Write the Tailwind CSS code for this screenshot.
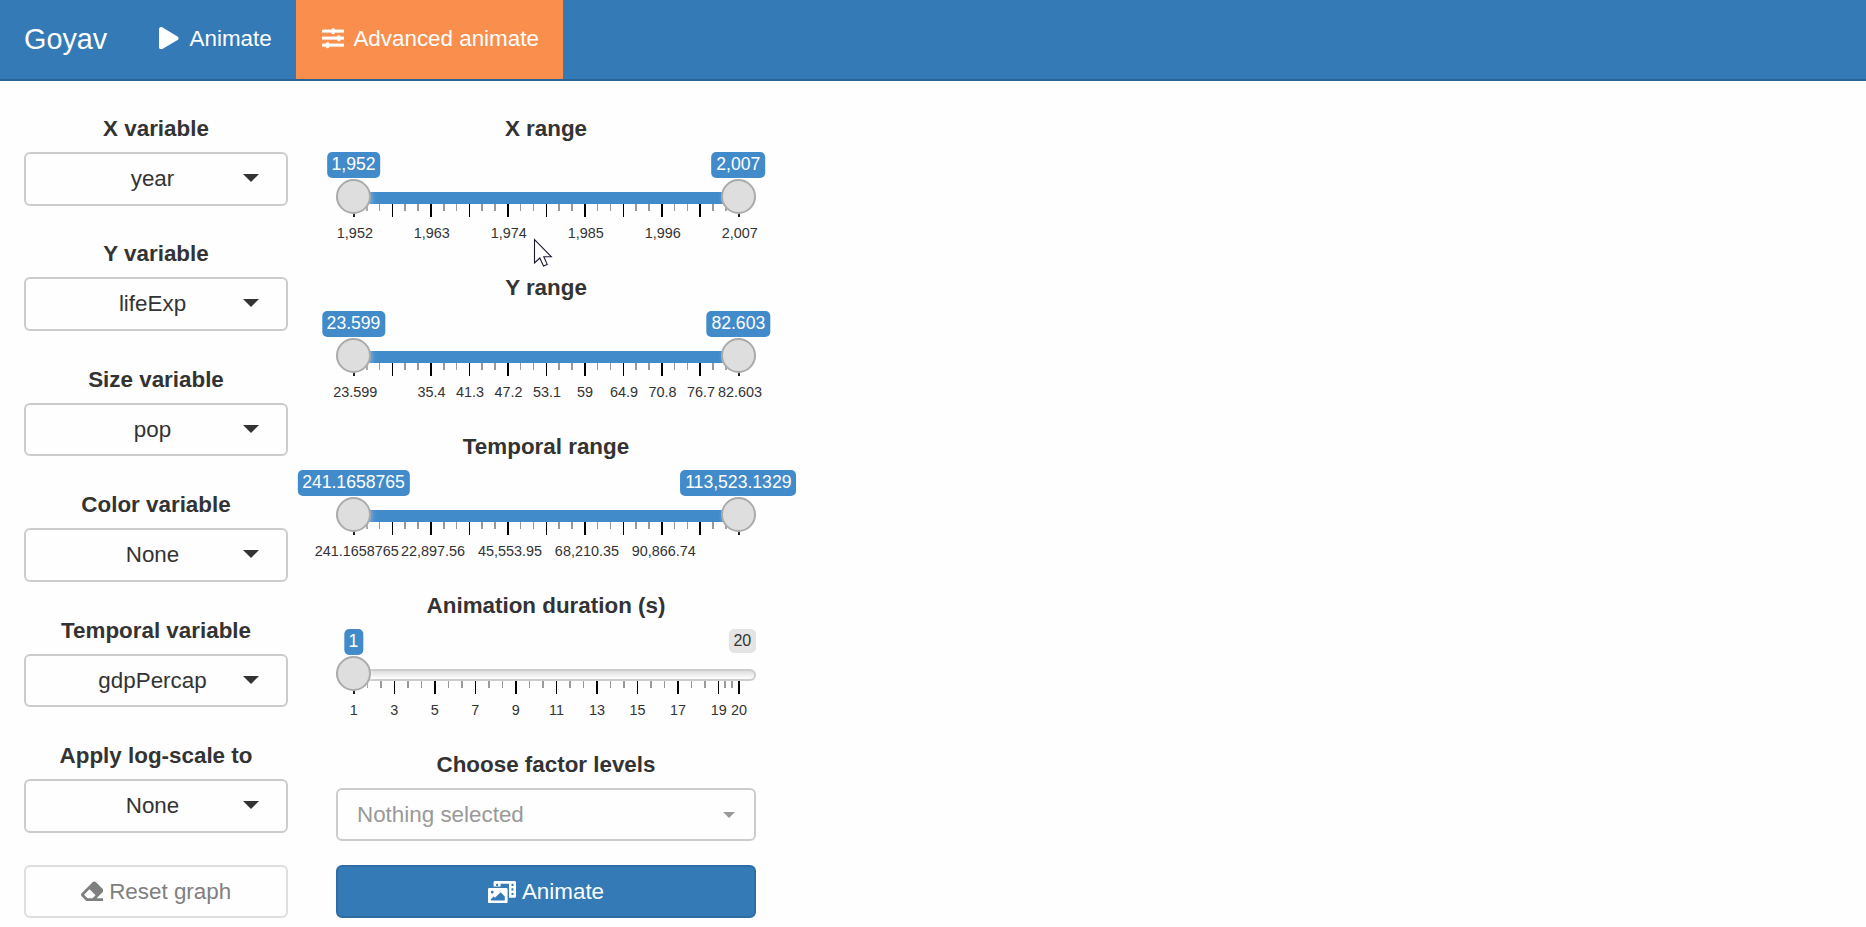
<!DOCTYPE html>
<html lang="en">
<head>
<meta charset="utf-8">
<title>Goyav</title>
<script src="https://cdn.jsdelivr.net/npm/@tailwindcss/browser@4"></script>
</head>
<body class="h-[927px] overflow-hidden bg-[#fefefe] font-['Liberation_Sans',Arial,sans-serif] text-[22.4px] leading-8 text-[#333]">

<nav class="flex h-[81px] border-b-2 border-[#2a6496] bg-[#337ab7] text-white">
  <a class="flex w-[135px] items-center pl-6 pb-px text-[28.8px]">Goyav</a>
  <a class="flex w-[161px] items-center pl-6 pb-[3px]">
    <svg class="h-[22.4px] w-[19.6px]" viewBox="0 0 448 512" fill="currentColor"><path d="M424.4 214.7L72.4 6.6C43.8-10.3 0 6.1 0 47.9V464c0 37.5 40.7 60.1 72.4 41.3l352-208c31.4-18.5 31.5-64.1 0-82.6z"/></svg>
    <span class="ml-[11px] pt-px">Animate</span>
  </a>
  <a class="flex w-[267px] items-center bg-[#fa8e4d] pl-[26px] pb-[3px]">
    <svg class="size-[22.4px]" viewBox="0 0 512 512" fill="currentColor" stroke="currentColor" stroke-width="8"><path d="M496 384H160v-16c0-8.8-7.2-16-16-16h-32c-8.8 0-16 7.2-16 16v16H16c-8.8 0-16 7.2-16 16v32c0 8.8 7.2 16 16 16h80v16c0 8.8 7.2 16 16 16h32c8.8 0 16-7.2 16-16v-16h336c8.8 0 16-7.2 16-16v-32c0-8.8-7.2-16-16-16zm0-160h-80v-16c0-8.8-7.2-16-16-16h-32c-8.8 0-16 7.2-16 16v16H16c-8.8 0-16 7.2-16 16v32c0 8.8 7.2 16 16 16h336v16c0 8.8 7.2 16 16 16h32c8.8 0 16-7.2 16-16v-16h80c8.8 0 16-7.2 16-16v-32c0-8.8-7.2-16-16-16zm0-160H288V48c0-8.8-7.2-16-16-16h-32c-8.8 0-16 7.2-16 16v16H16C7.2 64 0 71.2 0 80v32c0 8.8 7.2 16 16 16h208v16c0 8.8 7.2 16 16 16h32c8.8 0 16-7.2 16-16v-16h208c8.8 0 16-7.2 16-16V80c0-8.8-7.2-16-16-16z"/></svg>
    <span class="ml-[9px] pt-px">Advanced animate</span>
  </a>
</nav>

<main class="flex gap-12 pl-6 pt-[31px]">
  <section class="w-[264px] shrink-0">
    <div id="variables"></div>
    <button class="flex h-[53.4px] w-full items-center justify-center rounded-md border-2 border-[#dedede] text-[#7f7f7f]">
      <svg class="mr-[6px] size-[22.4px]" viewBox="0 0 512 512" fill="currentColor"><path d="M497.941 273.941c18.745-18.745 18.745-49.137 0-67.882l-160-160c-18.745-18.745-49.136-18.746-67.883 0l-256 256c-18.745 18.745-18.745 49.137 0 67.882l96 96A48.004 48.004 0 0 0 144 480h356c6.627 0 12-5.373 12-12v-40c0-6.627-5.373-12-12-12H355.883l142.058-142.059zm-302.627-62.627l137.373 137.373L265.373 416H150.628l-80-80 124.686-124.686z"/></svg>
      <span class="pt-px">Reset graph</span>
    </button>
  </section>

  <section class="w-[420px] shrink-0">
    <div id="sliders"></div>
    <div class="h-[117px]">
      <div class="mb-[7px] pt-px text-center font-bold">Choose factor levels</div>
      <div class="flex h-[53px] items-center justify-between rounded-md border-2 border-[#ccc] pl-[19px] pr-[19px] text-[#999]">
        <span>Nothing selected</span>
        <span class="border-x-[6.4px] border-t-[6.4px] border-x-transparent border-t-[#999]"></span>
      </div>
    </div>
    <button class="flex h-[53.4px] w-full items-center justify-center rounded-md border-2 border-[#2e6da4] bg-[#337ab7] text-white">
      <svg class="mr-[6px] h-[22.4px] w-7" viewBox="0 0 640 512" fill="currentColor"><path d="M608 0H160a32 32 0 0 0-32 32v96h160V64h192v320h128a32 32 0 0 0 32-32V32a32 32 0 0 0-32-32zM232 103a9 9 0 0 1-9 9h-30a9 9 0 0 1-9-9V73a9 9 0 0 1 9-9h30a9 9 0 0 1 9 9zm352 208a9 9 0 0 1-9 9h-30a9 9 0 0 1-9-9v-30a9 9 0 0 1 9-9h30a9 9 0 0 1 9 9zm0-104a9 9 0 0 1-9 9h-30a9 9 0 0 1-9-9v-30a9 9 0 0 1 9-9h30a9 9 0 0 1 9 9zm0-104a9 9 0 0 1-9 9h-30a9 9 0 0 1-9-9V73a9 9 0 0 1 9-9h30a9 9 0 0 1 9 9zm-168 57H32a32 32 0 0 0-32 32v288a32 32 0 0 0 32 32h384a32 32 0 0 0 32-32V192a32 32 0 0 0-32-32zM96 224a32 32 0 1 1-32 32 32 32 0 0 1 32-32zm288 224H64v-32l64-64 32 32 128-128 96 96z"/></svg>
      Animate
    </button>
  </section>
</main>

<!-- mouse pointer -->
<svg class="absolute left-[533px] top-[238px] h-[30px] w-[21px]" viewBox="0 0 21 30"><path d="M1.5 1.5V25L6.8 20L10.5 28L14.2 26.4L10.8 18.7H18.3Z" fill="#fff" stroke="#1d1830" stroke-width="1.1"/></svg>

<script>
  const variables = [
    ['X variable', 'year'], ['Y variable', 'lifeExp'], ['Size variable', 'pop'],
    ['Color variable', 'None'], ['Temporal variable', 'gdpPercap'], ['Apply log-scale to', 'None'],
  ];
  document.getElementById('variables').innerHTML = variables.map(([label, value]) => `
    <div class="h-[125.44px]">
      <div class="mb-[7px] pt-px text-center font-bold">${label}</div>
      <div class="flex h-[53.6px] items-center rounded-md border-2 border-[#ccc] pr-[27px]">
        <span class="flex-1 pl-9 text-center">${value}</span>
        <span class="-mt-0.5 border-x-8 border-t-8 border-x-transparent border-t-[#333]"></span>
      </div>
    </div>`).join('');

  const START = 17.15, SPAN = 384.8;
  // Each entry of labels is [position on the scale from 0 to 1, text].
  const even = (texts, step) => texts.map((t, i) => [i * step, t]);
  const tenths = Array.from({length: 11}, (_, i) => i / 10);
  const odd = Array.from({length: 10}, (_, i) => i * 2 / 19);
  const sliders = [
    {title: 'X range', from: '1,952', to: '2,007', major: tenths,
     labels: even(['1,952', '1,963', '1,974', '1,985', '1,996', '2,007'], .2)},
    {title: 'Y range', from: '23.599', to: '82.603', major: tenths,
     labels: even(['23.599', '', '35.4', '41.3', '47.2', '53.1', '59', '64.9', '70.8', '76.7', '82.603'], .1)},
    {title: 'Temporal range', from: '241.1658765', to: '113,523.1329', major: tenths,
     labels: even(['241.1658765', '22,897.56', '45,553.95', '68,210.35', '90,866.74'], .2)},
    {title: 'Animation duration (s)', from: '1', max: '20', major: [...odd, 1],
     labels: [...even(['1', '3', '5', '7', '9', '11', '13', '15', '17', '19'], 2 / 19), [1, '20']]},
  ];
  const at = p => (START + p * SPAN).toFixed(2);
  const badge = (x, t) => `<span class="absolute top-0 h-[26px] -translate-x-1/2 rounded-[5px] bg-[#428bca] px-[4.8px] text-[17.6px] leading-[25px] text-white" style="left:${x}px">${t}</span>`;
  const handle = x => `<span class="absolute top-[27px] size-[35px] rounded-full border-2 border-[#ababab] bg-[#dedede] shadow-[1.6px_1.6px_4.8px_rgba(255,255,255,0.3)]" style="left:${x}px"></span>`;
  document.getElementById('sliders').innerHTML = sliders.map(s => {
    let ticks = '';
    s.major.forEach((p, i) => {
      ticks += `<i class="absolute top-[52px] h-[13px] w-[1.6px] bg-black" style="left:${at(p)}px"></i>`;
      const next = s.major[i + 1];
      if (next !== undefined) for (const f of [1 / 3, 2 / 3])
        ticks += `<i class="absolute top-[52px] h-[7px] w-[1.6px] bg-[#999]" style="left:${at(p + (next - p) * f)}px"></i>`;
    });
    const labels = s.labels.map(([p, t]) =>
      `<span class="absolute top-[73px] -translate-x-[46%] text-[14.4px] leading-4" style="left:${(START + .3 + p * SPAN).toFixed(2)}px">${t}</span>`).join('');
    return `
    <div class="h-[159px]">
      <div class="mb-[7px] pt-px text-center font-bold">${s.title}</div>
      <div class="relative h-[119px] whitespace-nowrap">
        <div class="absolute top-10 h-3 w-full rounded-full border-2 border-[#ccc] bg-linear-to-b from-[#dedede] to-white"></div>
        ${s.to ? '<div class="absolute top-10 left-[17px] h-3 w-[385px] bg-[#428bca]"></div>' : ''}
        ${s.to ? '' : `<span class="absolute right-0 top-0 h-6 rounded-[5px] bg-[#e4e4e4] px-[4.8px] text-[16px] leading-[23px]">${s.max}</span>`}
        ${ticks}${labels}
        ${badge(17.5, s.from)}${s.to ? badge(402.3, s.to) : ''}
        ${handle(0)}${s.to ? handle(385) : ''}
      </div>
    </div>`;
  }).join('');
</script>
</body>
</html>
